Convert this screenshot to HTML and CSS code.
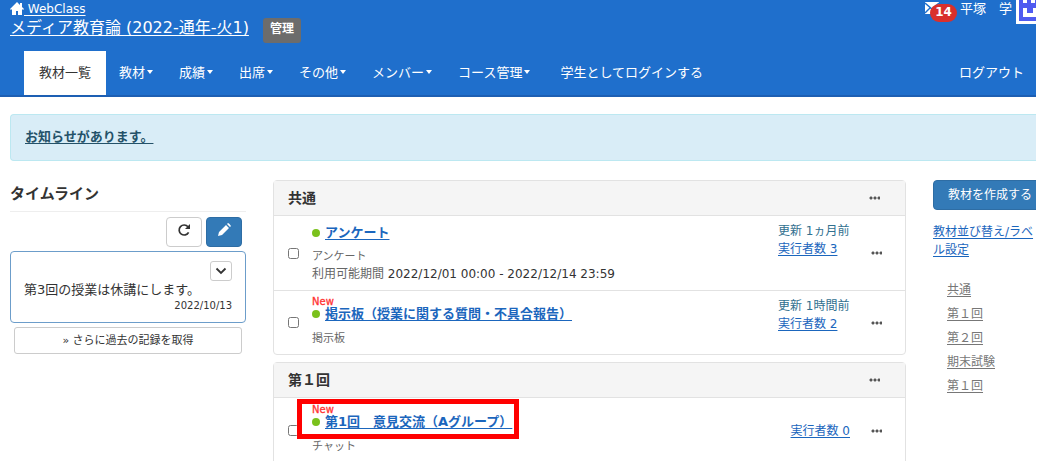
FILE: index.html
```
<!DOCTYPE html>
<html lang="ja">
<head>
<meta charset="utf-8">
<title>メディア教育論 - WebClass</title>
<link rel="stylesheet" href="styles.css">
</head>
<body>
<div class="page">
<header class="header">
  <div class="topbar">
    <div class="brand">
      <a class="home" href="#"><svg class="home-icon" viewBox="0 0 14 13" aria-hidden="true"><path d="M7 0 0 7l1 1 1-1v6h4V9h2v4h4V7l1 1 1-1-2-2V1h-2v2z"/></svg> WebClass</a>
      <div class="course">
        <a class="course-name" href="#">メディア教育論 (2022-通年-火1)</a>
        <span class="role">管理</span>
      </div>
    </div>
    <div class="account">
      <a class="mail" href="#" aria-label="メッセージ"><svg viewBox="0 0 14 12" aria-hidden="true"><path fill="#fff" d="M0 0h14v12H0z"/><path fill="none" stroke="#1f6fcc" stroke-width="1.4" d="m0 1 7 6 7-6M0 11l5-5"/></svg><span class="count">14</span></a>
      <span class="user">平塚　学</span>
      <svg class="avatar" viewBox="0 0 20 24" aria-hidden="true"><path fill="#fff" d="M0 0h20v24H0z"/><path fill="#4f5bf0" d="M3 0h17v21H3z"/><path fill="#fff" d="M7 0h4v3H7zM7 8h4v5h6V8h3v9H7zM15 0h4v3h-4z"/></svg>
    </div>
  </div>
  <nav class="nav">
    <a class="tab active" href="#">教材一覧</a>
    <a class="tab drop" href="#">教材</a>
    <a class="tab drop" href="#">成績</a>
    <a class="tab drop" href="#">出席</a>
    <a class="tab drop" href="#">その他</a>
    <a class="tab drop" href="#">メンバー</a>
    <a class="tab drop" href="#">コース管理</a>
    <a class="tab student" href="#">学生としてログインする</a>
    <a class="tab logout" href="#">ログアウト</a>
  </nav>
</header>
<div class="alert"><a href="#">お知らせがあります。</a></div>
<div class="columns">
  <aside class="timeline">
    <h2>タイムライン</h2>
    <div class="tools">
      <button class="tool" type="button" aria-label="更新"><svg viewBox="0 0 14 14" aria-hidden="true"><path fill="none" stroke="#333" stroke-width="1.7" d="M11.6 9.3A5 5 0 1 1 11 3.8"/><path fill="#333" d="M13 1v5H8z"/></svg></button>
      <button class="tool primary" type="button" aria-label="編集"><svg viewBox="0 0 14 14" aria-hidden="true"><path fill="#fff" d="m1 13 1-4 7-7 3 3-7 7zM10 1l1-1q1 0 3 3l-1 1z"/></svg></button>
    </div>
    <article class="post">
      <button class="fold" type="button" aria-label="開く"><svg viewBox="0 0 12 8" aria-hidden="true"><path fill="none" stroke="#333" stroke-width="1.8" d="m1.5 1.5 4.5 4.5 4.5-4.5"/></svg></button>
      <p>第3回の授業は休講にします。</p>
      <time>2022/10/13</time>
    </article>
    <button class="more" type="button">» さらに過去の記録を取得</button>
  </aside>
  <main class="materials">
    <section class="panel">
      <div class="panel-head"><h3>共通</h3><button class="dots" type="button" aria-label="メニュー"></button></div>
      <div class="item">
        <input type="checkbox" aria-label="アンケート">
        <div class="info">
          <div class="title"><a href="#">アンケート</a></div>
          <div class="kind">アンケート</div>
          <div class="term"><span>利用可能期間</span> 2022/12/01 00:00 - 2022/12/14 23:59</div>
        </div>
        <div class="stats"><span>更新 1ヵ月前</span><a href="#">実行者数 3</a></div>
        <button class="dots" type="button" aria-label="メニュー"></button>
      </div>
      <div class="item short">
        <input type="checkbox" aria-label="掲示板">
        <div class="info">
          <div class="new">New</div>
          <div class="title"><a href="#">掲示板（授業に関する質問・不具合報告）</a></div>
          <div class="kind">掲示板</div>
        </div>
        <div class="stats"><span>更新 1時間前</span><a href="#">実行者数 2</a></div>
        <button class="dots" type="button" aria-label="メニュー"></button>
      </div>
    </section>
    <section class="panel">
      <div class="panel-head"><h3>第１回</h3><button class="dots" type="button" aria-label="メニュー"></button></div>
      <div class="item short marked">
        <input type="checkbox" aria-label="第1回 意見交流">
        <div class="info">
          <div class="new">New</div>
          <div class="title"><a href="#">第1回　意見交流（Aグループ）</a></div>
          <div class="kind">チャット</div>
        </div>
        <div class="stats"><a href="#">実行者数 0</a></div>
        <button class="dots" type="button" aria-label="メニュー"></button>
      </div>
      <div class="item"></div>
    </section>
  </main>
  <aside class="side">
    <button class="create" type="button">教材を作成する</button>
    <a class="sort" href="#">教材並び替え/ラベル設定</a>
    <ul>
      <li><a href="#">共通</a></li>
      <li><a href="#">第１回</a></li>
      <li><a href="#">第２回</a></li>
      <li><a href="#">期末試験</a></li>
      <li><a href="#">第１回</a></li>
    </ul>
  </aside>
</div>
</div>
</body>
</html>
```
FILE: styles.css
```
*, *::before, *::after { box-sizing: border-box; }
html { overflow: hidden; }
body {
  margin: 0;
  background: #fff;
  color: #333;
  font: 12px/18px "DejaVu Sans", "Noto Sans CJK JP", sans-serif;
}
h2, h3, p, ul { margin: 0; padding: 0; }
a { color: #1b66bd; text-underline-offset: 2px; }
button { padding: 0; font: inherit; }
.page { margin-right: 2px; height: 100vh; overflow: hidden; }

.header { background: #1f6fcc; border-bottom: 2px solid #1d5fb3; color: #fff; }
.header a { color: #fff; }
.topbar { display: flex; justify-content: space-between; height: 51px; padding-left: 10px; }
.home { display: flex; width: max-content; line-height: 18px; white-space: pre; }
.home-icon { width: 14px; height: 13px; margin-top: 2px; fill: #fff; }
.course { display: flex; gap: 14px; }
.course-name { font-size: 16px; line-height: 20px; }
.role { height: 25px; padding: 0 7px; border-radius: 3px; background: #6c6c6c; font-weight: bold; line-height: 23px; }
.account { display: flex; align-items: flex-start; }
.mail { position: relative; width: 35px; height: 24px; }
.mail svg { width: 14px; height: 12px; margin-top: 2px; }
.count { position: absolute; left: 5px; top: 4px; width: 27px; height: 18px; border-radius: 9px; background: #d9302c; font-weight: bold; line-height: 17px; text-align: center; }
.user { font-size: 13px; margin-right: 4px; }
.avatar { width: 20px; height: 24px; }
.nav { display: flex; padding: 0 12px 0 24px; font-size: 13px; line-height: 44px; }
.tab { padding: 0 13px; text-decoration: none; white-space: nowrap; }
.nav .active { padding: 0 15px; background: #fff; color: #333; }
.drop::after { content: ""; display: inline-block; margin-left: 2px; vertical-align: 3px; border: 3px solid transparent; border-top: 4px solid #fff; border-bottom: 0; }
.nav .student { margin-left: 4px; }
.nav .logout { margin-left: auto; padding: 0; }

.alert { margin: 17px 0 19px 10px; padding: 13px 14px 14px; border: 1px solid #bce8f1; border-right: 0; border-radius: 4px 0 0 4px; background: #d9edf7; font-size: 13px; font-weight: bold; }
.alert a { color: #245269; }

.columns { display: grid; grid-template-columns: 236fr 633fr 103fr; gap: 27px; padding-left: 10px; }
.timeline h2 { padding: 4px 0 7px; border-bottom: 1px solid #eee; font-size: 15px; line-height: 20px; }
.tools { display: flex; justify-content: flex-end; gap: 4px; padding: 5px 4px 4px 0; }
.tool { width: 36px; height: 30px; border: 1px solid #ccc; border-radius: 4px; background: #fff; }
.tool svg { width: 14px; height: 14px; }
.primary { border-color: #2e6da4; background: #337ab7; }
.post { display: flex; flex-direction: column; padding: 9px 13px; border: 1px solid #6c9dca; border-radius: 4px; }
.fold { align-self: flex-end; width: 22px; height: 20px; border: 1px solid #ccc; border-radius: 3px; background: #fff; line-height: 10px; }
.fold svg { width: 12px; height: 8px; }
.post p { font-size: 13px; }
.post time { align-self: flex-end; font-size: 10px; line-height: 14px; }
.more { display: block; width: calc(100% - 8px); height: 27px; margin: 4px auto 0; border: 1px solid #ccc; border-radius: 3px; background: #fff; color: #333; font-size: 11px; }

.panel { margin-bottom: 7px; border: 1px solid #e2e2e2; border-radius: 4px; }
.panel-head { display: flex; align-items: center; justify-content: space-between; height: 35px; padding: 0 25px 0 14px; border-bottom: 1px solid #e2e2e2; background: #f5f5f5; }
h3 { font-size: 14px; }
.item { display: flex; align-items: center; min-height: 74px; padding: 0 23px 0 14px; }
.item + .item { border-top: 1px solid #e2e2e2; }
.item input { width: 11px; height: 11px; margin: 0 13px 0 0; }
.info { flex: 1; }
.title { display: flex; align-items: center; font-size: 13px; font-weight: bold; line-height: 18px; }
.title::before { content: ""; width: 8px; height: 8px; margin-right: 5px; border-radius: 50%; background: #7ac11c; }
.kind { margin-top: 6px; color: #666; font-size: 11px; }
.term { line-height: 16px; }
.term span { color: #666; }
.new { color: #f33; font-size: 10px; line-height: 8px; -webkit-text-stroke: 0.3px #f33; }
.short { min-height: 64px; }
.short .title { line-height: 16px; }
.short .kind { margin-top: 8px; }
.stats { display: grid; align-self: flex-start; width: 72px; margin-right: 21px; padding-top: 6px; color: #31708f; }
.item .stats a { white-space: nowrap; }
.dots { width: 11px; height: 12px; border: 0; background: radial-gradient(circle, #555 1px, transparent 2px) 0 50% / 4px 4px repeat-x; }
.marked { position: relative; padding-top: 1px; }
.marked .stats { align-self: center; justify-content: end; padding: 0; }
.marked::after { content: ""; position: absolute; left: 23px; top: 1px; width: 222px; height: 40px; border: 5px solid #f00; }

.side { min-width: 0; }
.create { width: 132px; height: 30px; padding-left: 14px; border: 1px solid #2e6da4; border-radius: 4px; background: #337ab7; color: #fff; text-align: left; }
.sort { display: block; margin: 13px 0 19px; }
.side ul { padding-left: 14px; list-style: none; }
.side li { line-height: 24px; }
.side li a { color: #777; }
```
